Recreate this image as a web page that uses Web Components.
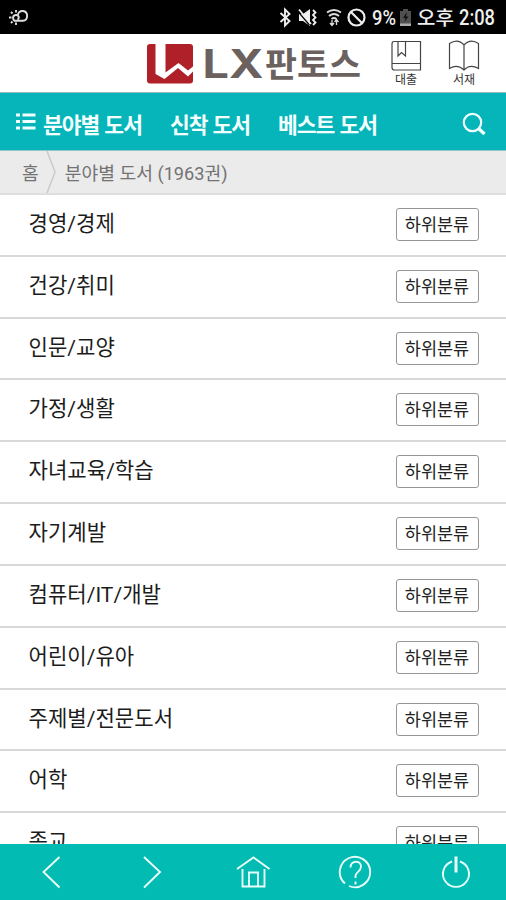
<!DOCTYPE html>
<html lang="ko">
<head>
<meta charset="UTF-8">
<meta name="viewport" content="width=device-width, initial-scale=1">
<title>분야별 도서</title>
<style>
    body {
        margin: 0;
        width: 506px;
        height: 900px;
        overflow: hidden;
        background-color: white;
        font-family: Roboto, "Noto Sans CJK KR", sans-serif;
    }
</style>
</head>
<body>
<library-app>
    <status-bar slot="top"></status-bar>
    <brand-header slot="top"></brand-header>
    <main-nav slot="top">
        <nav-link>분야별 도서</nav-link>
        <nav-link>신착 도서</nav-link>
        <nav-link>베스트 도서</nav-link>
    </main-nav>
    <bread-crumb slot="top" home="홈">분야별 도서 (1963권)</bread-crumb>
    <category-row>경영/경제</category-row>
    <category-row>건강/취미</category-row>
    <category-row>인문/교양</category-row>
    <category-row>가정/생활</category-row>
    <category-row>자녀교육/학습</category-row>
    <category-row>자기계발</category-row>
    <category-row>컴퓨터/IT/개발</category-row>
    <category-row>어린이/유아</category-row>
    <category-row>주제별/전문도서</category-row>
    <category-row>어학</category-row>
    <category-row>종교</category-row>
    <tool-bar slot="bottom"></tool-bar>
</library-app>

<script>
class baseElement extends HTMLElement {
    constructor() {
        super();
        this.attachShadow({ mode: "open" });
    }

    connectedCallback() {
        const template = document.createElement("template");
        template.innerHTML = this.getTemplate() + this.getStyles();
        this.shadowRoot.replaceChildren(template.content.cloneNode(true));
    }
}

class libraryApp extends baseElement {
    getTemplate() {
        return `
        <slot name="top"></slot>
        <main><slot></slot></main>
        <slot name="bottom"></slot>
      `;
    }

    getStyles() {
        return `
        <style>
        :host {
            display: flex;
            flex-direction: column;
            height: 900px;
        }
        main {
            flex: 1;
            min-height: 0;
            overflow: hidden;
        }
        </style>
      `;
    }
}

class statusBar extends baseElement {
    getTemplate() {
        return `
        <svg width="506" height="34" viewBox="0 0 506 34">
            <!-- weather -->
            <g fill="none" stroke="#ddd" stroke-width="1.9">
                <path d="M15.500 21c-3-.5-3.500-5.500 0-6 3-.5 4.500 3 2 4.500M15.500 20.700h7.500c5.500-.5 5.500-9 0-9.700-3-.3-5 1.500-5 4"/>
                <path d="M16 10v2.500M11 12l1.500 1.500M9 17.500h2.500M11 23l1.500-1.500M16 22.500v2.500"/>
            </g>
            <!-- bluetooth -->
            <path d="M280.500 13l9 8-4.500 4.500v-16l4.500 4.500-9 8" fill="none" stroke="#eee" stroke-width="1.900"/>
            <!-- muted -->
            <path d="M299 14h4l7-5v17l-7-5h-4z" fill="#eee"/>
            <path d="M297.500 11l12 14" stroke="#000" stroke-width="1.200"/>
            <path d="M299 9.500l12 14.500M313 10l2.500 2.500-2.500 2.500 2.500 2.500-2.500 2.500 2.500 2.500-2.500 2.500" fill="none" stroke="#eee" stroke-width="1.800"/>
            <!-- wifi -->
            <g fill="none" stroke="#ddd" stroke-width="1.900">
                <path d="M327 12.500q7-5 14 0M329 16q5-4 10 0M331.500 19q2.500-2 5 0"/>
            </g>
            <path d="M332 20v5M336.500 25v-5M330 23l2 2.500 2-2.500M334.500 22l2-2.500 2 2.500" fill="none" stroke="#ddd" stroke-width="1.300"/>
            <!-- blocked -->
            <g fill="none" stroke="#eee" stroke-width="2.200">
                <circle cx="356.500" cy="17.500" r="8"/>
                <path d="M351 12l11 11"/>
            </g>
            <text x="372" y="25" font-size="21" textLength="24" lengthAdjust="spacingAndGlyphs">9%</text>
            <!-- battery -->
            <path d="M403 9h5v2h3v15h-11v-15h3z" fill="#505050"/>
            <path d="M400 23.500h11v2.500h-11z" fill="#aaa"/>
            <path d="M407 12l-4 6h2.500l-1 4 4-5.500h-2.500z" fill="#111"/>
            <text class="ko" x="417" y="24.500" font-size="19" textLength="37" lengthAdjust="spacingAndGlyphs">오후</text>
            <text x="459" y="25" font-size="22" textLength="36" lengthAdjust="spacingAndGlyphs">2:08</text>
        </svg>
      `;
    }

    getStyles() {
        return `
        <style>
        :host {
            display: block;
            height: 34px;
            background-color: black;
        }
        svg { display: block; }
        text {
            fill: #eee;
            font-family: Roboto, sans-serif;
            font-weight: 500;
        }
        .ko { font-family: "Noto Sans CJK KR", sans-serif; }
        </style>
      `;
    }
}

class brandHeader extends baseElement {
    getTemplate() {
        return `
        <svg class="logo" width="216" height="58" viewBox="146 34 216 58">
            <rect x="147" y="44" width="46" height="39.500" rx="3" fill="#b02029"/>
            <path d="M155.500 44h10v28.500l13-9.500 9.500 7.500 5-4v5l-5 5-10-8.500-13.500 11-9-5z" fill="#fff"/>
            <text class="latin" x="202.500" y="77.500" font-size="39" textLength="61" lengthAdjust="spacingAndGlyphs">LX</text>
            <text x="265" y="76.500" font-size="34" textLength="96" lengthAdjust="spacingAndGlyphs">판토스</text>
        </svg>
        <div class="menu">
            <a>
                <svg width="32" height="32" viewBox="390 40 32 32">
                    <path d="M394 41.500h26.500v28.500h-26q-2.500 0-2.500-2.500v-23.500q0-2.500 2-2.500M392 63.500h28.500M398 41.500v14.500l3.500-3.500 4 3.500v-14.500"/>
                </svg>
                <span>대출</span>
            </a>
            <a>
                <svg width="32" height="32" viewBox="448 40 32 32">
                    <path d="M464 45q-6-7-14.500-1.500v25q8-5 14.500 1.500 6-6.500 14.500-1.500v-25q-8-5.500-14.500 1.500zv24.500"/>
                </svg>
                <span>서재</span>
            </a>
        </div>
      `;
    }

    getStyles() {
        return `
        <style>
        :host {
            display: flex;
            justify-content: space-between;
            box-sizing: border-box;
            height: 58px;
            padding: 0 26px 0 146px;
            background-color: white;
        }
        .logo text {
            fill: #6b615f;
            font-family: "Noto Sans CJK KR", sans-serif;
            font-weight: 700;
        }
        .logo .latin { font-family: Inter, sans-serif; }
        .menu {
            display: flex;
            gap: 26px;
            padding-top: 6px;
        }
        a {
            display: flex;
            flex-direction: column;
            align-items: center;
            width: 32px;
        }
        a svg {
            fill: none;
            stroke: #444;
            stroke-width: 1.2;
        }
        span {
            color: #333;
            font-size: 12px;
            line-height: 16px;
        }
        </style>
      `;
    }
}

class mainNav extends baseElement {
    getTemplate() {
        return `
        <svg class="list" width="20" height="17" viewBox="0 0 20 17">
            <path d="M0 2h4M0 8.500h4M0 15h4M6.500 2h13M6.500 8.500h13M6.500 15h13"/>
        </svg>
        <nav><slot></slot></nav>
        <svg class="search" width="24" height="24" viewBox="0 0 24 24">
            <circle cx="10.500" cy="10.500" r="8.700" stroke-width="2.200"/>
            <path d="M16.500 16.500l6 5.500" stroke-width="3.400"/>
        </svg>
      `;
    }

    getStyles() {
        return `
        <style>
        :host {
            display: flex;
            align-items: center;
            box-sizing: border-box;
            height: 59px;
            padding: 0 20px 0 16px;
            border-top: 1px solid #9bbcbd;
            border-bottom: 1px solid #8fc6c8;
            background-color: #05b5ba;
        }
        svg {
            fill: none;
            stroke: #f0ffff;
        }
        .list {
            stroke-width: 2.8;
            margin-bottom: 1px;
        }
        .search { margin-top: 4px; }
        nav {
            display: flex;
            flex: 1;
            gap: 28px;
            margin: 4px 0 0 7px;
        }
        </style>
      `;
    }
}

class navLink extends baseElement {
    getTemplate() {
        return `<slot></slot>`;
    }

    getStyles() {
        return `
        <style>
        :host {
            display: block;
            color: #f4ffff;
            font-family: "Noto Sans CJK KR", sans-serif;
            font-size: 21.5px;
            font-weight: 700;
            letter-spacing: -1px;
            line-height: 30px;
            white-space: nowrap;
        }
        </style>
      `;
    }
}

class breadCrumb extends baseElement {
    getTemplate() {
        return `
        <span class="home">${this.getAttribute("home")}</span>
        <svg width="12" height="42" viewBox="0 0 12 42">
            <path d="M1 0l8 21-8 21" fill="none" stroke="#cbcbcb" stroke-width="1.500"/>
        </svg>
        <span><slot></slot></span>
      `;
    }

    getStyles() {
        return `
        <style>
        :host {
            display: flex;
            align-items: center;
            box-sizing: border-box;
            height: 44px;
            padding-left: 22px;
            border-bottom: 2px solid #dedede;
            background-color: #ebebeb;
            color: #737373;
            font-size: 18.2px;
            line-height: 38px;
            white-space: nowrap;
        }
        span { padding-top: 4px; }
        svg { margin: 0 7px 0 7px; }
        </style>
      `;
    }
}

class categoryRow extends baseElement {
    getTemplate() {
        return `
        <span><slot></slot></span>
        <button>하위분류</button>
      `;
    }

    getStyles() {
        return `
        <style>
        :host {
            display: flex;
            justify-content: space-between;
            align-items: flex-start;
            box-sizing: border-box;
            height: 61.84px;
            padding: 13px 27.5px 0 28.5px;
            border-bottom: 2px solid #d9d9d9;
            background-color: white;
        }
        span {
            color: #1c1c1c;
            font-size: 21.1px;
            line-height: 31px;
        }
        button {
            box-sizing: border-box;
            width: 83px;
            height: 33px;
            padding: 2px 0 0;
            border: 1.5px solid #969696;
            border-radius: 3px;
            background-color: white;
            color: #222;
            font-family: inherit;
            font-size: 17.5px;
            line-height: 29px;
            white-space: nowrap;
        }
        </style>
      `;
    }
}

class toolBar extends baseElement {
    getTemplate() {
        return `
        <svg viewBox="0 0 36 36"><path d="M26.500 3L10.500 18l16 15.500"/></svg>
        <svg viewBox="0 0 36 36"><path d="M10 3l16 15-16 15.500"/></svg>
        <svg viewBox="0 0 36 36"><path d="M2 15L18.500 3.500l16 11.500M7.500 15v17.500h22v-17.500M14 32v-13.500h9v13.500"/></svg>
        <svg viewBox="-1.500 0 36 36">
            <path d="M7.500 29.500a15.200 15.200 0 1 1 4 2.500M5.500 27.500l1.500 1.500"/>
            <path d="M13 13.500c0-7.500 10.500-7.500 10.500-1 0 5-5.500 5.500-5.500 9.500v2M18 27.500v3"/>
        </svg>
        <svg viewBox="0 0 36 36"><path d="M15 7.500a13 13 0 1 0 8 0"/><path d="M19 2.500v16" stroke-width="3"/></svg>
      `;
    }

    getStyles() {
        return `
        <style>
        :host {
            display: grid;
            grid-template-columns: repeat(5, 1fr);
            place-items: center;
            height: 56px;
            background-color: #02bbb2;
        }
        svg {
            width: 36px;
            height: 36px;
            fill: none;
            stroke: #e9fffd;
            stroke-width: 1.9;
        }
        </style>
      `;
    }
}

customElements.define("library-app", libraryApp);
customElements.define("status-bar", statusBar);
customElements.define("brand-header", brandHeader);
customElements.define("main-nav", mainNav);
customElements.define("nav-link", navLink);
customElements.define("bread-crumb", breadCrumb);
customElements.define("category-row", categoryRow);
customElements.define("tool-bar", toolBar);
</script>
</body>
</html>
